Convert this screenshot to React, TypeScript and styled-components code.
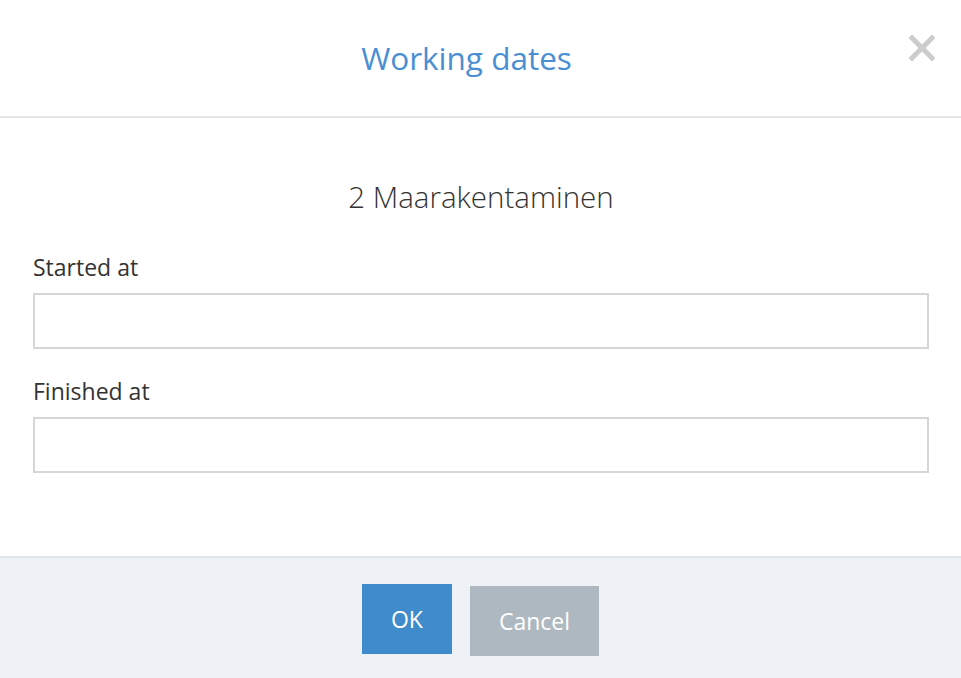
import React from "react";
import styled, { createGlobalStyle } from "styled-components";

const Global = createGlobalStyle`
  html, body { margin: 0; padding: 0; background: #fff; }
  body { font-family: "Open Sans", "Liberation Sans", sans-serif; }
  * { box-sizing: border-box; }
`;

const Modal = styled.div`
  width: 961px;
  height: 678px;
  display: flex;
  flex-direction: column;
  background: #fff;
  overflow: hidden;
`;

const Header = styled.header`
  position: relative;
  height: 118px;
  padding-right: 28px;
  border-bottom: 2px solid #e5e5e5;
  display: flex;
  align-items: center;
  justify-content: center;
`;

const Title = styled.h1`
  margin: 0;
  font-weight: 400;
  font-size: 31.5px;
  line-height: 40px;
  color: #4a8fd3;
`;

const Close = styled.button`
  position: absolute;
  top: 34px;
  right: 25px;
  width: 28px;
  height: 28px;
  padding: 0;
  border: none;
  background: none;
  cursor: pointer;
  display: flex;
  align-items: center;
  justify-content: center;
`;

const Body = styled.div`
  padding: 59px 32px 83px 33px;
  display: flex;
  flex-direction: column;
`;

const Subtitle = styled.h2`
  margin: 0 0 35px;
  text-align: center;
  font-weight: 300;
  font-size: 29.5px;
  line-height: 40px;
  color: #333;
`;

const Group = styled.div<{ $last?: boolean }>`
  display: flex;
  flex-direction: column;
  margin-bottom: ${(p) => (p.$last ? "0" : "27px")};
`;

const Label = styled.label`
  font-size: 23px;
  line-height: 31px;
  color: #333;
  margin-bottom: 10px;
`;

const Input = styled.input`
  height: 56px;
  width: 100%;
  border: 2px solid #d6d6d6;
  background: #fff;
  outline: none;
  font: inherit;
  padding: 0 12px;
`;

const Footer = styled.footer`
  flex: 1;
  background: #eef1f6;
  border-top: 2px solid #e1e5eb;
  display: flex;
  justify-content: center;
  align-items: flex-start;
  gap: 18px;
  padding-top: 26px;
`;

const Button = styled.button<{ $variant: "primary" | "secondary" }>`
  height: 70px;
  padding: 0 29px;
  border: none;
  font-family: "Open Sans", "Liberation Sans", sans-serif;
  font-size: 23px;
  color: #fff;
  cursor: pointer;
  background: ${(p) => (p.$variant === "primary" ? "#3f8bcb" : "#adb8c1")};
  margin-top: ${(p) => (p.$variant === "primary" ? "0" : "2px")};
  line-height: 1;
`;

export default function App() {
  return (
    <>
      <Global />
      <Modal>
        <Header>
          <Title>Working dates</Title>
          <Close aria-label="Close">
            <svg width="26" height="26" viewBox="0 0 26 26">
              <path d="M3 3 L23 23 M23 3 L3 23" stroke="#cccccc" strokeWidth="5" strokeLinecap="square" />
            </svg>
          </Close>
        </Header>
        <Body>
          <Subtitle>2 Maarakentaminen</Subtitle>
          <Group>
            <Label>Started at</Label>
            <Input type="text" />
          </Group>
          <Group $last>
            <Label>Finished at</Label>
            <Input type="text" />
          </Group>
        </Body>
        <Footer>
          <Button $variant="primary">OK</Button>
          <Button $variant="secondary">Cancel</Button>
        </Footer>
      </Modal>
    </>
  );
}
